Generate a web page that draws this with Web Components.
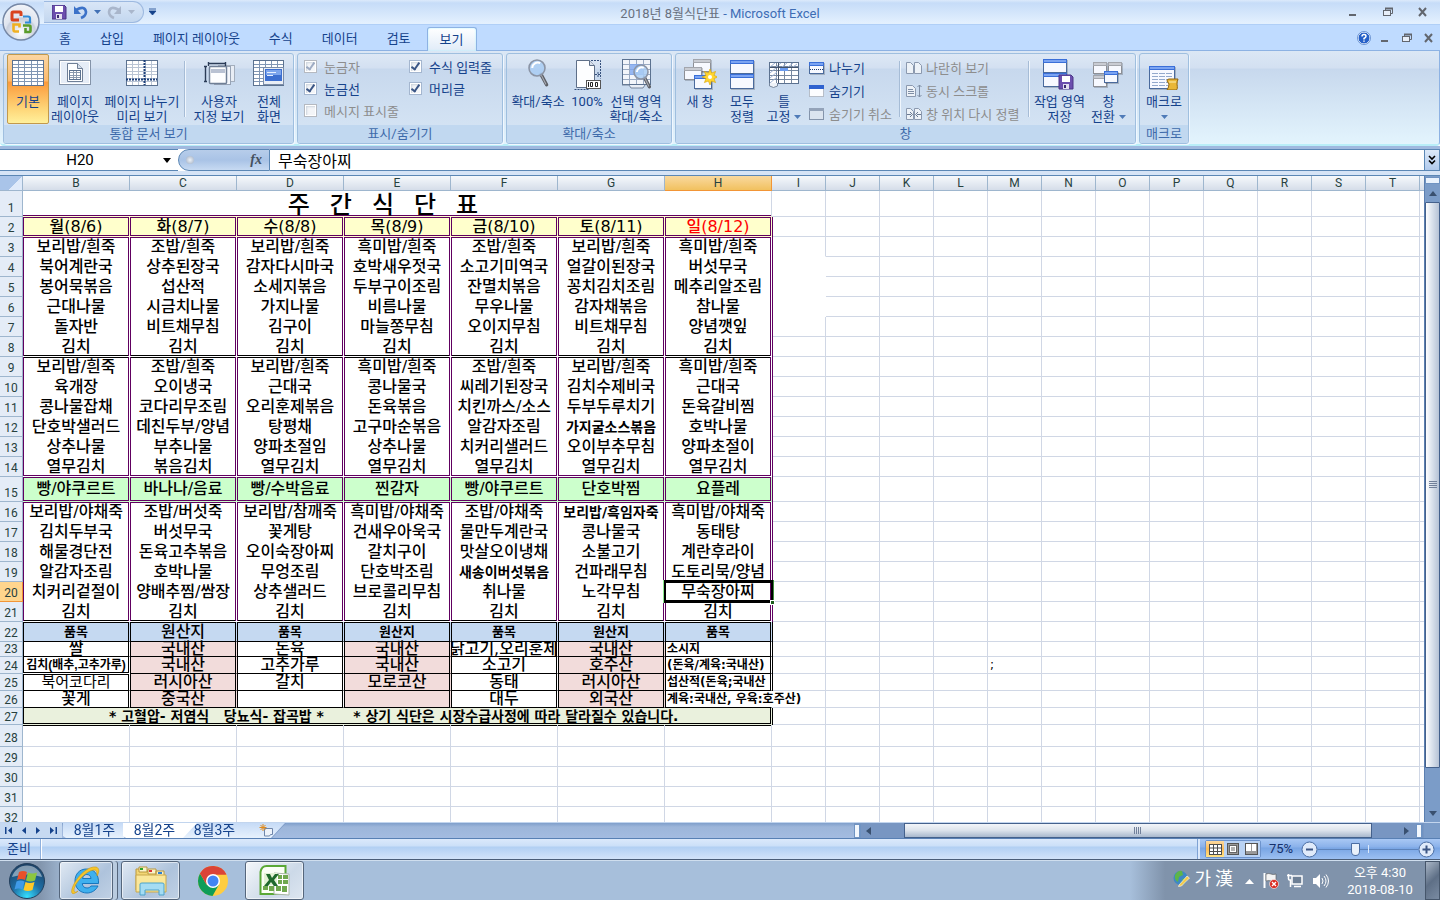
<!DOCTYPE html>
<html lang="ko">
<head>
<meta charset="utf-8">
<title>2018년 8월식단표 - Microsoft Excel</title>
<style>
html, body { height: 100%; margin: 0; }
body { font-family: Roboto, "Noto Sans CJK KR", sans-serif; font-size: 13px; color: #15428b; overflow: hidden; }
</style>
</head>
<body>
<xl-app></xl-app>
<script>
const RESET = `
*, *::before, *::after { box-sizing: border-box; }
button, input { font: inherit; color: inherit; margin: 0; padding: 0; border: 0; background: none; }
button { cursor: default; white-space: nowrap; }
svg { display: block; flex: none; }
`;

function define(name, css, html, setup) {
  customElements.define(name, class extends HTMLElement {
    connectedCallback() {
      if (this.shadowRoot) return;
      const root = this.attachShadow({ mode: 'open' });
      root.innerHTML = `<style>${RESET}${css}</style>${typeof html === 'function' ? html(this) : html}`;
      if (setup) setup(root, this);
    }
  });
}

/* ---------- icons ---------- */
const svg = (w, h, body) => `<svg width="${w}" height="${h}" viewBox="0 0 ${w} ${h}" aria-hidden="true">${body}</svg>`;
const win = (x, y, w, h, on = true) => `
  <rect x="${x + 1}" y="${y + 1}" width="${w}" height="${h}" fill="#00000030"/>
  <rect x="${x}.5" y="${y}.5" width="${w - 1}" height="${h - 1}" fill="#f7f9ff" stroke="${on ? '#4a6a9c' : '#8d8f95'}"/>
  <rect x="${x}" y="${y}" width="${w}" height="4" fill="${on ? '#3a6fd8' : '#a3a6ad'}"/>
  <rect x="${x + 1}" y="${y + 1}" width="${w - 2}" height="2" fill="${on ? '#7ba4f2' : '#c9ccd3'}"/>`;
function grid(x, y, w, h, cols, rows, stroke = '#8096b4', fill = '#fff') {
  let s = `<rect x="${x}.5" y="${y}.5" width="${w}" height="${h}" fill="${fill}" stroke="#5c7290"/>`;
  for (let i = 1; i < cols; i++) s += `<path d="M${x + Math.round(w * i / cols)}.5 ${y + 1}v${h - 1}" stroke="${stroke}"/>`;
  for (let i = 1; i < rows; i++) s += `<path d="M${x + 1} ${y + Math.round(h * i / rows)}.5h${w - 1}" stroke="${stroke}"/>`;
  return s;
}
const lens = (x, y, r) => `
  <path d="M${x + r * .5} ${y + r * .8}l${r * .7} ${r * 1.3}" stroke="#5c5f66" stroke-width="3.4" stroke-linecap="round"/>
  <path d="M${x + r * .5} ${y + r * .8}l${r * .6} ${r * 1.2}" stroke="#a5a8b0" stroke-width="1.2" stroke-linecap="round"/>
  <circle cx="${x}" cy="${y}" r="${r}" fill="#a9cdf3" fill-opacity=".85" stroke="#8b94a5" stroke-width="1.6"/>
  <path d="M${x - r * .6} ${y}a${r * .7} ${r * .7} 0 0 1 ${r} -${r * .6}" stroke="#fff" stroke-width="2" fill="none"/>`;
const floppy = (x, y) => `
  <path d="M${x} ${y}h12l2 2v12h-14z" fill="#6c4fae" stroke="#4a3585"/>
  <rect x="${x + 3}" y="${y + 1}" width="8" height="6" fill="#fff"/>
  <rect x="${x + 4}" y="${y + 9}" width="6" height="5" fill="#e3e0ef"/><rect x="${x + 5}" y="${y + 10}" width="2" height="3" fill="#3b2b70"/>`;
const ICONS = {
  normal: svg(32, 32, grid(0, 2, 31, 25, 5, 7)),
  page: svg(32, 32, `<rect x=".5" y="2.5" width="31" height="24" fill="#e6edf7" stroke="#8493a8"/><rect x="1.5" y="3.5" width="29" height="22" fill="none" stroke="#fff"/>
    <path d="M8.500 5.500h10l5 5v13h-15z" fill="#fdfeff" stroke="#6f7f96"/><path d="M18.500 5.500v5h5" fill="#d5dfec" stroke="#6f7f96"/>${grid(10, 12, 11, 9, 3, 4, '#8b99ad')}`),
  pagebreak: svg(32, 32, grid(0, 2, 31, 25, 5, 7, '#b9c4d4') + `<path d="M18.500 2v25M0 21.500h31" stroke="#1c3f7a" stroke-width="2" stroke-dasharray="2 1"/>`),
  custom: svg(32, 32, `<rect x="15.500" y="7.500" width="16" height="16" fill="#e8edf5" stroke="#a3aebd"/><rect x="11.500" y="8.500" width="16" height="18" fill="#f3f6fb" stroke="#97a3b5"/><rect x="6.500" y="8.500" width="17" height="17" rx="1" fill="#fdfeff" stroke="#6f7f96" stroke-width="1.500"/><rect x="8" y="11" width="14" height="4" fill="#b9c2d3"/>
    <path d="M5 5.500h18M5.500 4v4M22.500 4v4M2.500 8v15M1 8.500h3M1 23.500h3" stroke="#2b3c57" stroke-width="1.400" fill="none"/>`),
  full: svg(32, 32, grid(0, 2, 30, 25, 5, 7) + `<rect x="10.500" y="9.500" width="20" height="17" fill="#e9eef6" stroke="#7b8da8"/><rect x="12" y="11" width="17" height="12" fill="#3d6fd0"/><rect x="13" y="12" width="15" height="5" fill="#7da5ec"/><path d="M14 14.500h9M14 17.500h6" stroke="#e6efff"/>`),
  zoom: svg(32, 32, lens(15, 10, 8)),
  hundred: svg(32, 32, `<path d="M5.500 2.500h13l5 5v22h-18z" fill="#fdfeff" stroke="#5e6f88"/><path d="M18.500 2.500v5h5" fill="#d9e1ec" stroke="#5e6f88"/>
    <path d="M20 2.500h9.500v18M3.500 31.500h14M24 16.500h6M27 14v5" stroke="#35507c" stroke-dasharray="2 1" fill="none"/><rect x="15.500" y="22.500" width="14" height="8" fill="#fff" stroke="#555"/><path d="M17.500 24v5M19.500 24.500h2v4h-2zM24.500 24.500h2v4h-2z" stroke="#222" fill="none"/>`),
  zoomsel: svg(32, 32, grid(2, 1, 28, 25, 4, 5, '#9aaac2', '#f2f5fa') + `<rect x="10" y="6" width="13" height="11" fill="#7ea7f0" fill-opacity=".8"/><path d="M2 27h7l2 3h12l2-3" fill="#e9eef6" stroke="#76869d"/>` + lens(21, 14, 7)),
  newwin: svg(34, 32, win(10, 1, 18, 13, false) + win(1, 9, 18, 13, false) + win(11, 17, 18, 14) + `<path d="M27 11l1.600 4 4-1.600-1.600 4 4 1.600-4 1.600 1.600 4-4-1.600-1.600 4-1.600-4-4 1.600 1.600-4-4-1.600 4-1.600-1.600-4 4 1.600z" fill="#ffd530" stroke="#d9a300" stroke-width=".6"/><circle cx="27" cy="19" r="2" fill="#fff"/>`),
  arrange: svg(26, 32, win(1, 2, 24, 14) + win(1, 16, 24, 15)),
  freeze: svg(32, 32, grid(1, 4, 29, 21, 4, 5, '#7788a0') + `<path d="M2 9l5-4M8 9l5-4M14 9l5-4M20 9l5-4M25 9l4-3M2 15l7-6M2 20l7-6M2 25l7-6" stroke="#9db2d4"/><path d="M10.500 5v20M2 9.500h28" stroke="#43536b"/><rect x="12" y="10" width="8" height="3" fill="#6b9cf0"/><path d="M1.500 25v3q4 3 8 0v-3" fill="#eef2f8" stroke="#76869d"/>`),
  savews: svg(34, 32, win(1, 1, 24, 14) + win(1, 15, 24, 14) + floppy(17, 17)),
  switchwin: svg(32, 32, win(1, 4, 14, 12, false) + win(16, 4, 14, 12, false) + win(1, 17, 14, 12, false) + win(12, 13, 14, 12)),
  macro: svg(32, 32, win(1, 8, 26, 23) + `<path d="M4 15.500h20M4 18.500h20M4 21.500h20M4 24.500h20M4 27.500h16" stroke="#93a9cc" stroke-dasharray="6 1"/><path d="M19 23q0-2 2-2h9q-1 3-1 5 1 6-1 6h-9q2-3 2-6z" fill="#e9b737" stroke="#8e6410"/><path d="M21 24h7" stroke="#fff0b0"/>`),
  split: svg(16, 14, win(0, 1, 15, 12) + `<path d="M1 8.500h14" stroke="#223f72" stroke-dasharray="1 1"/>`),
  hide: svg(16, 14, `<rect x=".5" y="1.500" width="14" height="11" fill="#fcfdff" stroke="#8a8f99" stroke-dasharray="1 1"/><rect y="1" width="15" height="4" fill="#2f62cf"/>`),
  unhide: svg(16, 14, `<rect x=".5" y="1.500" width="14" height="11" fill="#dbe4ef" stroke="#8494ab"/><rect y="1" width="15" height="3" fill="#94a3b9"/>`),
  sidebyside: svg(16, 14, `<path d="M.5 1.500h4l3 3v8h-7zM8.500 1.500h4l3 3v8h-7z" fill="#edf2f8" stroke="#8b99af"/>`),
  sync: svg(16, 14, `<path d="M.5 1.500h6l3 3v8h-9z" fill="#edf2f8" stroke="#8b99af"/><path d="M2 5.500h5M2 7.500h6M2 9.500h6M13.500 1v12M11.500 3l2-2 2 2M11.500 11l2 2 2-2" stroke="#7f8ea5" fill="none"/>`),
  reset: svg(16, 14, `<path d="M.5 1.500h4l3 3v8h-7zM8.500 1.500h4l3 3v8h-7z" fill="#edf2f8" stroke="#8b99af"/><path d="M1 7.500h4M11 7.500h4M4 5l2.500 2.500L4 10M12 5L9.500 7.500 12 10" stroke="#6b7b93" fill="none"/>`),
  office: svg(38, 38, `<defs><radialGradient id="o" cx=".5" cy=".8" r=".9"><stop offset="0" stop-color="#fff"/><stop offset=".45" stop-color="#c8cfdd"/><stop offset=".5" stop-color="#dfe4ee"/><stop offset="1" stop-color="#f7f9fc"/></radialGradient></defs>
    <circle cx="19" cy="19" r="18" fill="url(#o)" stroke="#7587a5" stroke-width="1.500"/>
    <g fill="none" stroke-width="3"><path d="M17 17h-6q-1 0-1-1v-6q0-1 1-1h7q1 0 1 1v3" stroke="#d9431e"/><path d="M21 13.500h5q2 0 2 2v4h-5" stroke="#2f8bd8" stroke-width="2.200"/><path d="M17 28.500h-4q-1.500 0-1.500-2v-5h6v3" stroke="#f0b020" stroke-width="2.600"/><path d="M21 22.500h6q1.500 0 1.500 1.500v4q0 1-1 1h-4v-4" stroke="#5b9d2b" stroke-width="2.600"/></g>`),
  save: svg(15, 15, floppy(0, 0)),
  undo: svg(15, 15, `<path d="M3 5q9-5 10 2 0 4-5 6" fill="none" stroke="#3c72c8" stroke-width="2.600"/><path d="M1 1v8h7z" fill="#3c72c8"/>`),
  redo: svg(15, 15, `<path d="M12 5Q3 0 2 7q0 4 5 6" fill="none" stroke="#a9b6cb" stroke-width="2.600"/><path d="M14 1v8H7z" fill="#a9b6cb"/>`),
  min: svg(12, 12, `<path d="M2 9h7" stroke="#62666e" stroke-width="2"/>`),
  restore: svg(12, 12, `<path d="M3.500 4V2.500h7v5H9" fill="none" stroke="#62666e"/><path d="M3 2.500h8" stroke="#62666e" stroke-width="2"/><rect x="1.500" y="4.500" width="7" height="5" fill="#e7eef8" stroke="#62666e"/>`),
  close: svg(12, 12, `<path d="M2 2l7 8M9 2L2 10" stroke="#62666e" stroke-width="2"/>`),
  help: svg(14, 14, `<circle cx="7" cy="7" r="6" fill="#2560c8" stroke="#fff"/><circle cx="7" cy="7" r="6.500" fill="none" stroke="#4f7fc8" stroke-width=".8"/><path d="M5 5.500q0-2 2-2t2 1.700q0 1-2 2.300v1M7 9.500v1.300" stroke="#fff" stroke-width="1.500" fill="none"/>`),
  orb: svg(38, 38, `<defs><radialGradient id="s" cx=".5" cy=".95" r=".95"><stop offset="0" stop-color="#35e0ff"/><stop offset=".45" stop-color="#1e6fa5"/><stop offset="1" stop-color="#1c3f63"/></radialGradient></defs><circle cx="19" cy="19" r="17.500" fill="url(#s)" stroke="#233f5c"/><path d="M4 15a15.500 15.500 0 0 1 30 0q-15-5-30 0z" fill="#fff" fill-opacity=".45"/>
    <path d="M11 10q4-2 8 0l-2 8q-4-2-8 0z" fill="#e9502a"/><path d="M20 10.500q4 2 9 0l-2 8q-5 2-9 0z" fill="#8cc63f"/><path d="M8.500 19.500q4-2 8 0l-2 8q-4-2-8 0z" fill="#3f9be8"/><path d="M17.500 20q4 2 9 0l-2 8q-5 2-9 0z" fill="#ffc928"/>`),
  ie: svg(34, 34, `<path d="M17.500 5c-7 0-11.500 5-11.500 12s5 12 12 12c5 0 9-3 11-7h-7c-1 1.500-2.500 2-4 2-3 0-4.500-2-4.700-4.500H29.500C30 10 25 5 17.500 5zM13.500 14.500c.5-2.500 2-4 4.300-4s4 1.500 4.200 4z" fill="#3fb0ee" stroke="#1876bd"/><path d="M9 27C2 33 1 28 5 20 10 10 20 2 27 3c4 1 3 6 1 9 0-4 0-6-3-6C18 6 4 20 5 27c1 2 3 1 4 0z" fill="#f6c52a" stroke="#cf9a10" stroke-width=".6"/>`),
  folder: svg(34, 34, `<path d="M2 5h10l2 3h15v18H2z" fill="#f2d675" stroke="#b9973c"/><path d="M5 3h8v5H5z" fill="#fbf3c9" stroke="#b9973c"/><path d="M14 5h8v5h-8zM22 7h8v5h-8z" fill="#fbf3c9" stroke="#b9973c"/><path d="M6 4h3v2H6z" fill="#2aa52a"/><path d="M15 6h3v2h-3z" fill="#d33"/><path d="M24 8h4v2h-4z" fill="#2a7fd3"/><path d="M2 11h30v17H2z" fill="#fae79a" stroke="#c9a84c"/><path d="M6 31V20q0-1 2-1h20q2 0 2 1v11h-5v-5H11v5z" fill="#a5dcf3" stroke="#4da3cb"/>`),
  chrome: svg(32, 32, `<circle cx="16" cy="16" r="15" fill="#ffcd40"/><path d="M16 16L3 8.500A15 15 0 0 1 29 9.500H16z" fill="#db4437"/><path d="M3 8.500A15 15 0 0 0 15.500 31L22 19.500 9.500 19.500z" fill="#0f9d58"/><path d="M3 8.500A15 15 0 0 1 29.500 9.500H16L9.500 19.500z" fill="#db4437"/><circle cx="16" cy="16" r="7" fill="#fff"/><circle cx="16" cy="16" r="5.500" fill="#4285f4"/>`),
  excel: svg(34, 34, `<path d="M2.500 8q1-6 6-6h19v28h-25z" fill="#fbfff6" stroke="#5aa836" stroke-width="2"/><path d="M16 9l15 1v21l-15-1z" fill="#fff" stroke="#aab8a8"/><path d="M20 11h4v4h-4zM25 11h5v4h-5zM20 16h4v4h-4zM25 16h5v4h-5zM5 22h5v4H5zM11 22h5v5h-5zM18 22h5v5h-5zM24 22h5v6h-5z" fill="#6fa84d"/><rect x="6" y="9" width="13" height="12" fill="#e4f2d5"/><path d="M8 10h4l2 4 3-4h4l-5 6 4 6h-4l-3-4-3 4H6l5-6z" fill="#1f6a2c"/>`),
};
const caret = '<svg width="7" height="4" viewBox="0 0 7 4" aria-hidden="true"><path d="M0 0h7L3.500 4z" fill="currentColor"/></svg>';

/* ---------- title bar ---------- */
define('xl-titlebar', `
:host { display: flex; position: relative; height: 25px; align-items: center; justify-content: space-between;
  background: linear-gradient(#dceafb, #c6dcf8 3px, #e3f0fe 23px); border-bottom: 1px solid #b0cff7; }
.qat { display: flex; align-items: center; gap: 6px; height: 22px; margin-left: 44px; padding: 0 8px 0 8px;
  border: 1px solid #9db9e0; border-left: 0; border-radius: 0 11px 11px 0; background: linear-gradient(#d9e6f7, #c3d7ef); }
.left { display: flex; align-items: center; gap: 5px; color: #4271b5; width: 400px; }
.dim { color: #a9b6cb; }
.orb { position: absolute; left: 2px; top: 3px; z-index: 3; }
h1 { margin: 0; font-size: 13px; font-weight: 400; color: #69717f; line-height: 20px; padding-top: 3px; }
h1 span { color: #3e6db5; }
.win { display: flex; justify-content: flex-end; gap: 23px; width: 400px; padding-right: 11px; }
`, `
<button class="orb" aria-label="Office 단추">${ICONS.office}</button>
<div class="left"><div class="qat">
  <button aria-label="저장">${ICONS.save}</button><button aria-label="실행 취소">${ICONS.undo}</button><button aria-label="취소 목록">${caret}</button>
  <button aria-label="다시 실행">${ICONS.redo}</button><button class="dim" aria-label="다시 실행 목록">${caret}</button></div>
  <button aria-label="사용자 지정"><svg width="8" height="8" viewBox="0 0 8 8"><path d="M0 1h7M0 3h7L3.500 7z" stroke="#15428b" fill="#15428b" stroke-width=".8"/></svg></button></div>
<h1>2018년 8월식단표 <span>- Microsoft Excel</span></h1>
<div class="win"><button aria-label="최소화">${ICONS.min}</button><button aria-label="이전 크기로">${ICONS.restore}</button><button aria-label="닫기">${ICONS.close}</button></div>`);

define('xl-tabs', `
:host { display: flex; height: 26px; padding-left: 47px; background: #bfdbff; align-items: flex-end; border-bottom: 1px solid #8db2e3; }
nav { display: flex; gap: 5px; flex: 1; align-items: flex-end; }
a { color: #15428b; text-decoration: none; padding: 0 12px; height: 24px; line-height: 24px; border: 1px solid transparent; border-bottom: 0; margin: 0 -1px; border-radius: 3px 3px 0 0; }
a[aria-current] { background: linear-gradient(#fff, #e0ebf8); border-color: #8db2e3; margin-bottom: -1px; box-shadow: inset 0 0 2px #a6f2ff; }
.win { display: flex; gap: 10px; padding: 0 5px 5px 0; align-items: center; }
.help { margin-right: -2px; }
`, `<nav><a href="#home">홈</a><a href="#insert">삽입</a><a href="#layout">페이지 레이아웃</a><a href="#formulas">수식</a><a href="#data">데이터</a><a href="#review">검토</a><a href="#view" aria-current="page">보기</a></nav>
<div class="win"><button class="help" aria-label="도움말">${ICONS.help}</button><button aria-label="창 최소화">${ICONS.min}</button><button aria-label="창 복원">${ICONS.restore}</button><button aria-label="창 닫기">${ICONS.close}</button></div>`);

/* ---------- ribbon ---------- */
define('ribbon-group', `
:host { display: flex; flex-direction: column; height: 91px; border: 1px solid #9fbfdf; border-radius: 3px; overflow: hidden;
  background: linear-gradient(#dde8f5, #d3e0f1 14px, #c7d8ed 15px, #d7e6f5); box-shadow: 1px 1px #f0f7ff; }
.body { display: flex; flex: 1; padding: 0 3px; }
.cap { height: 18px; line-height: 18px; background: #c1d8f0; text-align: center; color: #3e6aaa; }
`, el => `<div class="body"><slot></slot></div><div class="cap">${el.getAttribute('label')}</div>`);

define('big-button', `
:host { display: flex; }
button { flex: 1; display: flex; flex-direction: column; align-items: center; padding-top: 3px; line-height: 15px; border: 1px solid transparent; border-radius: 2px; }
.icon { height: 36px; }
.line { display: flex; align-items: center; gap: 4px; height: 15px; }
.line svg { color: #4f7bb8; }
:host([on]) button { border-color: #c2994c; background: linear-gradient(#fbd6a3, #fcb96c 38%, #fb9a3c 40%, #fed77a 80%, #fff09c); margin: 0 0 1px; }
`, el => {
  const lines = el.getAttribute('label').split('|');
  return `<button><span class="icon">${ICONS[el.getAttribute('icon')]}</span>${lines.map((t, i) =>
    `<span class="line">${t ? `<span>${t}</span>` : ''}${el.hasAttribute('menu') && i === lines.length - 1 ? caret : ''}</span>`).join('')}</button>`;
});

define('small-button', `
:host { display: block; }
button { display: flex; align-items: center; gap: 4px; height: 23px; }
button:disabled { color: #8d8d8d; }
`, el => `<button ${el.hasAttribute('off') ? 'disabled' : ''}>${ICONS[el.getAttribute('icon')]}<span>${el.getAttribute('label')}</span></button>`);

define('check-option', `
:host { display: block; }
label { display: flex; align-items: center; gap: 7px; height: 22px; }
input { appearance: none; position: relative; width: 13px; height: 13px; border: 1px solid #a4b6cf; background: #f3f5f8; box-shadow: inset 0 0 0 1px #fff, inset 2px 2px 2px #cdd4dd; }
input:checked::before { content: ""; position: absolute; left: 3px; top: 0; width: 5px; height: 9px; border: solid #3b5686; border-width: 0 2px 2px 0; transform: rotate(35deg); }
input:disabled { border-color: #b5b9c0; }
input:disabled::before { opacity: .45; }
input:disabled + span { color: #8d8d8d; }
`, el => `<label><input type="checkbox" ${el.hasAttribute('on') ? 'checked' : ''} ${el.hasAttribute('off') ? 'disabled' : ''}><span>${el.getAttribute('label')}</span></label>`);

define('xl-ribbon', `
:host { display: flex; gap: 3px; height: 95px; padding: 2px 3px; border-radius: 0 0 4px 4px; border-right: 1px solid #8db2e3;
  background: linear-gradient(#dbe7f5, #d3e0f1 17px, #c7d8ed 18px, #e3f4fd); border-bottom: 2px solid #b9eef8; }
.g1 { width: 291px; } .g2 { width: 206px; } .g3 { width: 166px; } .g4 { width: 461px; } .g5 { width: 50px; }
.w36 { width: 38px; } .w42 { width: 42px; } .w50 { width: 52px; } .w56 { width: 56px; } .w82 { width: 82px; }
hr { width: 2px; height: 56px; margin: 7px 1px 0; border: 0; border-left: 1px solid #a6bcd6; border-right: 1px solid #f0f6fd; }
.checks { display: grid; grid-template-columns: 105px auto; grid-auto-rows: 22px; padding: 1px 3px; align-content: start; }
.col { display: flex; flex-direction: column; padding: 2px 6px 0 4px; }
.wide { padding-right: 8px; }
`, `
<ribbon-group class="g1" label="통합 문서 보기">
  <big-button class="w42" on icon="normal" label="기본"></big-button><big-button class="w50" icon="page" label="페이지|레이아웃"></big-button>
  <big-button class="w82" icon="pagebreak" label="페이지 나누기|미리 보기"></big-button><hr><big-button class="w56" style="margin-left:4px" icon="custom" label="사용자|지정 보기"></big-button>
  <big-button class="w36" style="margin-left:3px" icon="full" label="전체|화면"></big-button></ribbon-group>
<ribbon-group class="g2" label="표시/숨기기"><div class="checks">
  <check-option label="눈금자" on off></check-option><check-option label="수식 입력줄" on></check-option>
  <check-option label="눈금선" on></check-option><check-option label="머리글" on></check-option>
  <check-option label="메시지 표시줄" off></check-option></div></ribbon-group>
<ribbon-group class="g3" label="확대/축소">
  <big-button class="w56" icon="zoom" label="확대/축소"></big-button><big-button class="w42" icon="hundred" label="100%"></big-button>
  <big-button class="w56" icon="zoomsel" label="선택 영역|확대/축소"></big-button></ribbon-group>
<ribbon-group class="g4" label="창">
  <big-button class="w42" icon="newwin" label="새 창"></big-button><big-button class="w42" icon="arrange" label="모두|정렬"></big-button>
  <big-button class="w42" icon="freeze" label="틀|고정" menu></big-button>
  <div class="col"><small-button icon="split" label="나누기"></small-button><small-button icon="hide" label="숨기기"></small-button><small-button icon="unhide" label="숨기기 취소" off></small-button></div><hr>
  <div class="col wide"><small-button icon="sidebyside" label="나란히 보기" off></small-button><small-button icon="sync" label="동시 스크롤" off></small-button><small-button icon="reset" label="창 위치 다시 정렬" off></small-button></div><hr>
  <big-button class="w56" icon="savews" label="작업 영역|저장"></big-button><big-button class="w42" icon="switchwin" label="창|전환" menu></big-button></ribbon-group>
<ribbon-group class="g5" label="매크로"><big-button class="w42" icon="macro" label="매크로|" menu></big-button></ribbon-group>`);

/* ---------- formula bar ---------- */
define('formula-bar', `
:host { display: flex; height: 29px; border-top: 3px solid #9fb9df; border-bottom: 4px solid #d6e4f6; color: #000; background: #fff; }
.name { display: flex; width: 178px; align-items: center; padding: 0 7px 0 1px; border-top: 1px solid #5b87b5; border-bottom: 1px solid #5b87b5; }
.name input { width: 158px; text-align: center; font-size: 15px; height: 20px; }
.name button { margin-left: auto; }
.fx { width: 92px; display: flex; align-items: center; justify-content: space-between; padding: 0 7px; border: 1px solid #5b87b5; border-radius: 11px 0 0 11px; background: linear-gradient(#b7cdea, #a9c3e6 50%, #c7daf2); }
.fx i { font: italic bold 14px "Liberation Serif", serif; color: #44505f; line-height: 18px; }
.dot { width: 8px; height: 8px; border-radius: 50%; background: radial-gradient(#eef2f7, #9eadc2); }
.val { flex: 1; min-width: 0; padding-left: 8px; font-size: 16px; border-top: 1px solid #5b87b5; border-bottom: 1px solid #5b87b5; }
.more { width: 16px; border: 1px solid #5b87b5; background: linear-gradient(#dce9f9, #b1caec); display: flex; align-items: center; justify-content: center; }
`, `<div class="name"><input aria-label="이름 상자" value="H20"><button aria-label="이름 목록"><svg width="8" height="5" viewBox="0 0 8 5"><path d="M0 0h8L4 5z"/></svg></button></div>
<div class="fx"><span class="dot"></span><i>fx</i></div><input class="val" aria-label="수식" value="무숙장아찌">
<button class="more" aria-label="수식 입력줄 확장"><svg width="8" height="10" viewBox="0 0 8 10"><path d="M1 1l3 3 3-3M1 5.500l3 3 3-3" fill="none" stroke="#000" stroke-width="1.600"/></svg></button>`);

/* ---------- worksheet ---------- */
const P = '#600060', K = '#000';
const HEIGHTS = [26,20,20,20,20,20,20,20,20,20,20,20,20,20,25,20,20,20,20,20,20,20,15,17,17,17,17,22,20,20,20,20];
const MENU = {
  2: ['월(8/6)','화(8/7)','수(8/8)','목(8/9)','금(8/10)','토(8/11)','일(8/12)'],
  3: ['보리밥/흰죽','조밥/흰죽','보리밥/흰죽','흑미밥/흰죽','조밥/흰죽','보리밥/흰죽','흑미밥/흰죽'],
  4: ['북어계란국','상추된장국','감자다시마국','호박새우젓국','소고기미역국','얼갈이된장국','버섯무국'],
  5: ['봉어묵볶음','섭산적','소세지볶음','두부구이조림','잔멸치볶음','꽁치김치조림','메추리알조림'],
  6: ['근대나물','시금치나물','가지나물','비름나물','무우나물','감자채볶음','참나물'],
  7: ['돌자반','비트채무침','김구이','마늘쫑무침','오이지무침','비트채무침','양념깻잎'],
  8: Array(7).fill('김치'),
  9: ['보리밥/흰죽','조밥/흰죽','보리밥/흰죽','흑미밥/흰죽','조밥/흰죽','보리밥/흰죽','흑미밥/흰죽'],
  10: ['육개장','오이냉국','근대국','콩나물국','씨레기된장국','김치수제비국','근대국'],
  11: ['콩나물잡채','코다리무조림','오리훈제볶음','돈육볶음','치킨까스/소스','두부두루치기','돈육갈비찜'],
  12: ['단호박샐러드','데친두부/양념','탕평채','고구마순볶음','알감자조림','가지굴소스볶음','호박나물'],
  13: ['상추나물','부추나물','양파초절임','상추나물','치커리샐러드','오이부추무침','양파초절이'],
  14: ['열무김치','볶음김치','열무김치','열무김치','열무김치','열무김치','열무김치'],
  15: ['빵/야쿠르트','바나나/음료','빵/수박음료','찐감자','빵/야쿠르트','단호박찜','요플레'],
  16: ['보리밥/야채죽','조밥/버섯죽','보리밥/참깨죽','흑미밥/야채죽','조밥/야채죽','보리밥/흑임자죽','흑미밥/야채죽'],
  17: ['김치두부국','버섯무국','꽃게탕','건새우아욱국','물만두계란국','콩나물국','동태탕'],
  18: ['해물경단전','돈육고추볶음','오이숙장아찌','갈치구이','맛살오이냉채','소불고기','계란후라이'],
  19: ['알감자조림','호박나물','무엉조림','단호박조림','새송이버섯볶음','건파래무침','도토리묵/양념'],
  20: ['치커리겉절이','양배추찜/쌈장','상추샐러드','브로콜리무침','취나물','노각무침','무숙장아찌'],
  21: Array(7).fill('김치'),
  22: ['품목','원산지','품목','원산지','품목','원산지','품목'],
  23: ['쌀','국내산','돈육','국내산','닭고기,오리훈제','국내산','소시지'],
  24: ['김치(배추,고추가루)','국내산','고추가루','국내산','소고기','호주산','(돈육/계육:국내산)'],
  25: ['북어코다리','러시아산','갈치','모로코산','동태','러시아산','섭산적(돈육;국내산'],
  26: ['꽃게','중국산','','','대두','외국산','계육:국내산, 우육:호주산)'],
};
const CLS = { G12: 'mid', F19: 'mid', G16: 'mid', B22: 'sm', D22: 'sm', E22: 'sm', F22: 'sm', G22: 'sm', H22: 'sm', B24: 'xs', B25: 'plain', H2: 'red',
  F23: 'clip', H23: 'note', H24: 'note', H25: 'note clip', H26: 'note' };

/* Each cell draws its half of a double border; --h shortens the sides where a horizontal gap crosses them. */
function menuCell(r, c, text) {
  const name = 'BCDEFGH'[c] + r, foot = r >= 22;
  const side = foot ? K : P;
  let t = 'transparent', b = 'transparent', line = 'transparent', bg = '#fff';
  if ([2, 3, 15, 16].includes(r)) t = P;
  if ([2, 14, 15].includes(r)) b = P;
  if ([9, 22].includes(r)) t = K;
  if ([8, 21].includes(r)) b = K;
  if (foot) line = K;
  if (name === 'B24') { b = K; line = '#fff'; }
  if (name === 'B25') t = K;
  if (r === 2) bg = '#ffffcc';
  if (r === 15) bg = '#ccffcc';
  if (r === 22) bg = '#c5d9f1';
  if (r > 22 && c % 2) bg = '#f2dcdb';
  const right = name === 'H26' ? 'transparent' : side;
  const height = b === 'transparent' ? '100%' : 'calc(100% - 1px)';
  const over = name === 'H20' ? '<i class="cursor"></i><i class="handle"></i>' : '';
  return `<td class="m ${CLS[name] || ''}" style="--l:${side};--r:${right};--t:${t};--b:${b};--h:${height};border-bottom-color:${line};background-color:${bg}"><div style="height:${HEIGHTS[r - 1] - 1}px">${text}</div>${over}</td>`;
}

define('sheet-grid', `
:host { display: block; flex: 1; min-width: 0; overflow: hidden; background: #fff; color: #000; }
table { border-collapse: separate; border-spacing: 0; table-layout: fixed; width: 1473px; }
th { font-weight: 400; padding: 0; color: #27413e; }
thead th { height: 15px; line-height: 14px; font-size: 12px; background: linear-gradient(#f6f9fc, #d5dde9); border-right: 1px solid #9eb6ce; border-bottom: 1px solid #9eb6ce; }
thead th:first-child { background: linear-gradient(135deg, #a9c4e9 62%, #dfeafa 63%); }
thead th.on { background: linear-gradient(#f9d99f, #f1c15f); border-color: #f29536; }
tbody th { height: 20px; font-size: 12px; line-height: 16px; vertical-align: bottom; background: #e4ecf7; border-right: 1px solid #9eb6ce; border-bottom: 1px solid #9eb6ce; }
tbody th.on { background: #ffd58d; border-color: #f29536; }
tbody th.cut { vertical-align: top; padding-top: 3px; }
td { padding: 0; border-right: 1px solid #d0d7e5; border-bottom: 1px solid #d0d7e5; white-space: pre; font-family: "DejaVu Sans", "Noto Sans CJK KR", sans-serif; }
td.m { position: relative; border-right-color: transparent; font-size: 16px; font-weight: 500;
  background-image: linear-gradient(var(--l) 0 0), linear-gradient(var(--r) 0 0), linear-gradient(var(--t) 0 0), linear-gradient(var(--b) 0 0);
  background-position: left top, right 1px top, left top, left bottom 1px; background-size: 1px var(--h), 1px var(--h), calc(100% - 1px) 1px, calc(100% - 1px) 1px;
  background-repeat: no-repeat; background-origin: border-box; }
td.m div { display: flex; justify-content: center; align-items: center; line-height: 18px; margin: 0 1px; }
td.mid div { font-size: 14px; font-weight: 700; } td.sm div { font-size: 13px; font-weight: 700; } td.xs div { font-size: 12px; font-weight: 700; font-family: "Liberation Sans", "Noto Sans CJK KR", sans-serif; }
td.plain div { font-size: 15px; font-weight: 400; }
td.red { color: #f00; }
td.note div { font-size: 12px; font-weight: 700; justify-content: flex-start; padding-left: 1px; }
td.clip div { overflow: hidden; }
td.title { border-bottom-color: #ffffcc; box-shadow: inset 0 -1px ${P}; font-weight: 500; font-size: 24px; text-align: center; font-family: "Liberation Sans", "Noto Sans CJK KR", sans-serif; }
td.title div { height: 25px; line-height: 27px; padding-right: 28px; }
td.foot { background: #eaf1dd; font-size: 14px; font-weight: 700; border-color: transparent; box-shadow: inset 1px 0 #000, inset -1px 0 #000, inset 0 -1px #000; }
td.foot div { height: 16px; line-height: 16px; padding-left: 86px; }
td.edge { position: relative; }
td.edge::before { content: ""; position: absolute; left: 0; top: 0; bottom: -1px; width: 1px; background: var(--l); }
td.under { box-shadow: inset 0 1px #000; }
td.blank { border-color: #fff; } td.noline { border-bottom-color: #fff; }
td.semi { font-size: 12px; } td.semi div { height: 16px; line-height: 16px; padding-left: 2px; }
.cursor { position: absolute; top: -2px; bottom: -2px; left: -1px; right: -2px; border: 3px solid #000; border-left-width: 2px; border-right-width: 2px; box-shadow: -1px 0 #8eea8e, 1px 0 #3d8f3d; z-index: 1; }
.handle { position: absolute; width: 5px; height: 5px; right: -4px; bottom: -4px; background: #1d5c1d; border: 1px solid #fff; z-index: 2; }
`, () => {
  const letters = 'BCDEFGHIJKLMNOPQRSTU'.split('');
  let h = `<table><colgroup><col style="width:23px">${letters.map((_, i) => `<col style="width:${i < 7 ? 107 : 54}px">`).join('')}</colgroup>
    <thead><tr><th></th>${letters.map(l => `<th scope="col" class="${l === 'H' ? 'on' : ''}">${l === 'U' ? '' : l}</th>`).join('')}</tr></thead><tbody>`;
  HEIGHTS.forEach((ht, i) => {
    const r = i + 1;
    h += `<tr style="height:${ht}px"><th scope="row" class="${r === 20 ? 'on' : r === 32 ? 'cut' : ''}" style="height:${ht}px;line-height:${ht < 18 ? 14 : 16}px">${r}</th>`;
    if (r === 1) h += '<td class="title" colspan="7"><div>주   간   식   단   표</div></td>';
    else if (r === 27) h += '<td class="foot" colspan="7"><div>* 고혈압- 저염식   당뇨식- 잡곡밥 *      * 상기 식단은 시장수급사정에 따라 달라질수 있습니다.</div></td>';
    else if (MENU[r]) h += MENU[r].map((t, c) => menuCell(r, c, t)).join('');
    else h += Array(7).fill(`<td class="${r === 28 ? 'under' : ''}"></td>`).join('');
    for (let c = 7; c < letters.length; c++) {
      let cls = '', st = '', body = '';
      if (c === 7) {
        if (r > 1 && r < 28 && r !== 26) { cls = 'edge'; st = `--l:${r < 22 ? P : K}`; }
        if (r === 3) cls += ' noline';
        if (r >= 4 && r <= 6) cls += ' blank';
      }
      if (letters[c] === 'M' && r === 24) { cls = 'semi'; body = '<div>;</div>'; }
      h += `<td class="${cls}" style="${st}">${body}</td>`;
    }
    h += '</tr>';
  });
  return h + '</tbody></table>';
});

define('v-scroll', `
:host { display: flex; flex-direction: column; width: 16px; background: #7b9cc8; border-left: 1px solid #5b7fb0; }
.split { height: 7px; background: #e9f2fd; border: 1px solid #6f93c2; margin-top: 1px; }
button { display: flex; align-items: center; justify-content: center; height: 18px; }
.thumb { height: 566px; flex: 0 1 auto; border: 1px solid #44618c; border-radius: 1px; background: linear-gradient(90deg, #fff, #dfe6ef 40%, #b6c3d6); display: flex; align-items: center; justify-content: center; }
.thumb i { width: 8px; height: 8px; background: repeating-linear-gradient(#71809a 0 1px, transparent 1px 2px); }
.gap { flex: 1; }
`, `<div class="split"></div><button aria-label="위로"><svg width="8" height="5" viewBox="0 0 8 5"><path d="M0 5h8L4 0z" fill="#39506f"/></svg></button><div class="thumb"><i></i></div><div class="gap"></div><button aria-label="아래로"><svg width="8" height="5" viewBox="0 0 8 5"><path d="M0 0h8L4 5z" fill="#39506f"/></svg></button>`);

define('sheet-tabs', `
:host { display: flex; height: 17px; background: linear-gradient(#7f9fcb, #9db6da 4px, #a3bbe0); border-top: 1px solid #c2d5ee; border-bottom: 1px solid #5880b4; }
.nav { display: flex; width: 62px; background: #c6d9f1; justify-content: space-around; align-items: center; padding: 0 1px; }
nav { display: flex; flex: 1; }
a { display: block; color: #15428b; text-decoration: none; font-size: 14px; line-height: 15px; height: 15px; text-align: center; width: 75px; margin-right: -16px; padding-right: 12px; background: linear-gradient(#c6dbf6, #e7f1fd); clip-path: polygon(0 0, 100% 0, calc(100% - 14px) 100%, 3px 100%, 0 13px); }
a.on { background: #fff; }
.shape { filter: drop-shadow(1px 0 #7d9ac6); display: flex; padding-left: 1px; }
.new { width: 42px; padding: 1px 0 0 16px; }
.scroll { display: flex; width: 570px; background: #7896c2; align-items: center; }
.split { width: 7px; height: 14px; background: #f2f7fd; border: 1px solid #6f93c2; border-right-width: 2px; }
.larr { padding-left: 5px; width: 43px; } .rarr { width: 44px; padding-left: 32px; }
.thumb { width: 468px; height: 15px; border: 1px solid #44618c; background: linear-gradient(#f2f5f9, #dbe2eb 50%, #a8b8cd); display: flex; align-items: center; justify-content: center; }
.thumb i { width: 8px; height: 7px; background: repeating-linear-gradient(90deg, #71809a 0 1px, transparent 1px 2px); }
.corner { width: 16px; background: #7b9cc8; }
.slant a { clip-path: polygon(14px 0, 100% 0, calc(100% - 14px) 100%, 0 100%); }
`, `<div class="nav">${['M1 1h1.500v7H1zM8 1v7L4 4.500z', 'M7 1v7L3 4.500z', 'M2 1v7l4-3.500z', 'M1 1v7l4-3.500zM6.500 1H8v7H6.500z'].map((d, i) =>
  `<button aria-label="시트 이동 ${i + 1}"><svg width="9" height="9" viewBox="0 0 9 9"><path d="${d}" fill="#15428b"/></svg></button>`).join('')}</div>
<nav><span class="shape"><a href="#w1">8월1주</a></span><span class="shape"><a class="on" href="#w2">8월2주</a></span><span class="shape slant"><a href="#w3">8월3주</a></span>
<span class="shape slant"><a class="new" href="#new" aria-label="시트 삽입"><svg width="16" height="13" viewBox="0 0 16 13"><path d="M5.500 4.500h8v6h-2l-1 1.500h-5z" fill="#eef3fa" stroke="#6f86aa"/><path d="M4 0v7M.5 3.500h7M1.500 1l5 5M6.500 1l-5 5" stroke="#e08b1e"/></svg></a></span></nav>
<div class="scroll"><span class="split"></span><button class="larr" aria-label="왼쪽"><svg width="5" height="8" viewBox="0 0 5 8"><path d="M5 0v8L0 4z" fill="#39506f"/></svg></button><div class="thumb"><i></i></div><button class="rarr" aria-label="오른쪽"><svg width="5" height="8" viewBox="0 0 5 8"><path d="M0 0v8l5-4z" fill="#39506f"/></svg></button><span class="split"></span></div><div class="corner"></div>`);

define('status-bar', `
:host { display: flex; height: 21px; background: linear-gradient(#dbe9fb, #cbdff8 7px, #b1cff3 8px, #d2e3f9); border-bottom: 1px solid #4a5d78; }
.ready { width: 41px; padding-left: 7px; line-height: 20px; border-right: 1px solid #8fb0dd; box-shadow: 1px 0 #fff; }
.fill { flex: 1; border-right: 1px solid #7ea2d4; }
.zoom { display: flex; align-items: center; width: 242px; padding: 0 5px; background: linear-gradient(#a9c8f4, #8ab1ea 8px, #79a5e4 9px, #9cc0f2); line-height: 18px; border-left: 2px solid #dbe9fb; }
.views { display: flex; height: 18px; border: 1px solid #6d93cc; border-radius: 2px; }
.views button { width: 18px; display: flex; align-items: center; justify-content: center; background: #b9d2f3; }
.views .on { background: linear-gradient(#fcd9a0, #fdbb55 50%, #ffe387); }
.pct { width: 40px; text-align: center; color: #15306b; }
input { appearance: none; flex: 1; min-width: 0; height: 18px; background: linear-gradient(90deg, transparent 50px, #dce9fb 50px 51px, transparent 51px) center / 100% 8px no-repeat, linear-gradient(#5d83bb 0 0) center / 100% 1px no-repeat; }
input::-webkit-slider-thumb { appearance: none; width: 9px; height: 13px; border: 1px solid #4a6da3; background: #e9f1fb; border-radius: 1px 1px 5px 5px; }
.r { width: 17px; }
`, `<div class="ready">준비</div><div class="fill"></div><div class="zoom">
<div class="views"><button class="on" aria-label="기본"><svg width="13" height="11" viewBox="0 0 13 11"><rect x=".5" y=".5" width="12" height="10" fill="#fff" stroke="#4d4d4d"/><path d="M4.500 0v11M8.500 0v11M0 4h13M0 7.500h13" stroke="#4d4d4d"/></svg></button>
<button aria-label="페이지 레이아웃"><svg width="12" height="12" viewBox="0 0 12 12"><rect x=".5" y=".5" width="11" height="11" fill="#999" stroke="#555"/><rect x="2.500" y="2.500" width="7" height="7" fill="#fff" stroke="#666"/><path d="M4 5h4M4 7h4" stroke="#666"/></svg></button>
<button aria-label="페이지 나누기"><svg width="13" height="12" viewBox="0 0 13 12"><rect x=".5" y=".5" width="12" height="11" fill="#999" stroke="#555"/><path d="M1 1h5v7H1zM7 1h4v7H7z" fill="#fff"/></svg></button></div>
<span class="pct">75%</span>
<button class="r" aria-label="축소"><svg width="17" height="17" viewBox="0 0 17 17"><circle cx="8.500" cy="8.500" r="7.500" fill="#dfeafa" stroke="#4a6da3"/><path d="M5 8.500h7" stroke="#3b5584" stroke-width="2"/></svg></button>
<input type="range" aria-label="확대/축소" min="0" max="100" value="36">
<button class="r" aria-label="확대"><svg width="17" height="17" viewBox="0 0 17 17"><circle cx="8.500" cy="8.500" r="7.500" fill="#dfeafa" stroke="#4a6da3"/><path d="M4.500 8.500h8M8.500 4.500v8" stroke="#3b5584" stroke-width="2"/></svg></button></div>`);

define('task-bar', `
:host { display: flex; height: 40px; color: #fff; border-top: 1px solid #cfdeee; background: linear-gradient(90deg, #8295ad, #8295ad 40px, #a7bfdb 70px, #a7bfdb calc(100% - 310px), #8093ab calc(100% - 275px)); }
.apps { display: flex; flex: 1; align-items: center; padding-left: 8px; }
.app { width: 59px; height: 39px; display: flex; align-items: center; justify-content: center; border: 1px solid #55667c; border-radius: 3px; background: linear-gradient(135deg, #e0e9f3, #aec3dc 60%, #c0d1e5); box-shadow: inset 0 0 0 1px #ffffff90; }
.orb { margin-right: 13px; }
.stack { width: 54px; box-shadow: inset 0 0 0 1px #ffffff90, 4px 0 #b9cbdf, 5px 0 #55667c; margin-right: 8px; }
.flat { background: none; border-color: transparent; box-shadow: none; width: 65px; }
.act { background: linear-gradient(135deg, #f4f7fa, #ccd9e8 60%, #dde6f0); }
.tray { display: flex; align-items: center; gap: 8px; font-size: 18px; }
.ime { display: flex; gap: 4px; align-items: center; line-height: 24px; margin: 0 4px 4px 0; }
.clock { width: 86px; text-align: center; font-size: 13px; line-height: 17px; margin: 0 2px 0 0; padding-top: 1px; }
.desk { width: 15px; border: 1px solid #46566b; background: linear-gradient(135deg, #a9b6c6, #5e6f86 50%, #7a8ba2); }
`, `<div class="apps"><button class="orb" aria-label="시작">${ICONS.orb}</button><button class="app stack" aria-label="Internet Explorer">${ICONS.ie}</button>
<button class="app" aria-label="탐색기">${ICONS.folder}</button><button class="app flat" aria-label="Chrome">${ICONS.chrome}</button><button class="app act" aria-label="Excel">${ICONS.excel}</button></div>
<div class="tray"><span class="ime"><svg width="17" height="17" viewBox="0 0 17 17"><circle cx="7.500" cy="8" r="7" fill="#3f88c5"/><path d="M2 5q3-5 7-4l1 4-4 2-1 5q-4-2-3-7zM9 9l5-1-3 6z" fill="#5eb548"/><path d="M6 15l8-9 2.500 2-8 8-3 .5z" fill="#f4cb4c" stroke="#fff" stroke-width=".6"/></svg><span>가</span><span>漢</span></span>
<svg width="9" height="6" viewBox="0 0 9 6"><path d="M0 6h9L4.500 1z" fill="#fff"/></svg>
<svg width="17" height="17" viewBox="0 0 17 17"><path d="M2.500 1v15" stroke="#fff" stroke-width="2"/><path d="M4 2q3-1 5 0t5 0v7q-3 1-5 0t-5 0z" fill="#f3f3f3" stroke="#555" stroke-width=".6"/><circle cx="12" cy="12" r="4.500" fill="#d8281e" stroke="#fff" stroke-width=".6"/><path d="M10 10l4 4M14 10l-4 4" stroke="#fff" stroke-width="1.400"/></svg>
<svg width="17" height="17" viewBox="0 0 17 17"><rect x="5" y="4" width="10" height="8" fill="#6d7f95" stroke="#fff" stroke-width="1.500"/><path d="M7 14.500h7M1.500 2v5q0 1 1 1h1v7M0 3.500h5" stroke="#fff" stroke-width="1.500" fill="none"/></svg>
<svg width="17" height="16" viewBox="0 0 17 16"><path d="M1 5h3l4-4v14l-4-4H1z" fill="#fff"/><path d="M10 5q2 3 0 6M12 3q4 5 0 10M14 1.500q5 6.500 0 13" stroke="#fff" fill="none"/></svg>
<div class="clock">오후 4:30<br>2018-08-10</div></div><button class="desk" aria-label="바탕 화면 보기"></button>`);

define('xl-app', `
:host { display: flex; flex-direction: column; height: 100vh; }
main { display: flex; flex: 1; min-height: 0; border-top: 1px solid #5b87b5; }
`, `<xl-titlebar></xl-titlebar><xl-tabs></xl-tabs><xl-ribbon></xl-ribbon><formula-bar></formula-bar>
<main><sheet-grid></sheet-grid><v-scroll></v-scroll></main><sheet-tabs></sheet-tabs><status-bar></status-bar><task-bar></task-bar>`);
</script>
</body>
</html>
